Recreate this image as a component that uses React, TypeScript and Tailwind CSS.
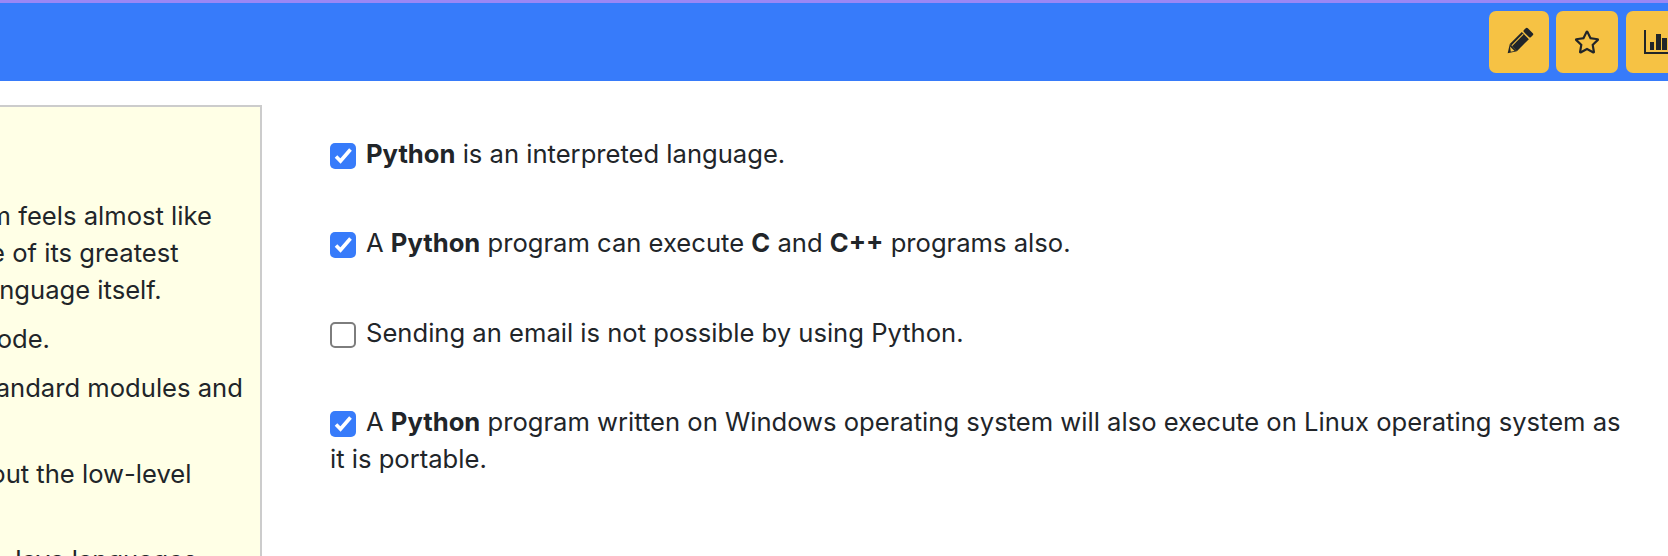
import React from 'react';
import { FaRegStar } from 'react-icons/fa';

const Check: React.FC<{ checked?: boolean }> = ({ checked }) =>
  checked ? (
    <span className="inline-flex w-[26px] h-[26px] rounded-[5px] bg-[#377bfa] items-center justify-center align-[-6px] mr-[10px]">
      <svg viewBox="0 0 26 26" className="w-[26px] h-[26px]" fill="none">
        <path d="M6 13.5l4.5 4.5L20.5 6.5" stroke="#fff" strokeWidth="3.6" />
      </svg>
    </span>
  ) : (
    <span className="inline-block w-[26px] h-[26px] rounded-[5px] bg-white border-2 border-[#7d7d7d] align-[-6px] mr-[10px]"></span>
  );

const PencilIcon = () => (
  <svg viewBox="0 0 24 24" className="w-6 h-6 overflow-visible">
    <g transform="rotate(45 12 12)" fill="#212529">
      <rect x="7" y="-4" width="10" height="5.5" rx="1.5" />
      <rect x="7" y="3" width="10" height="17" />
      <path d="M7 20h10l-5 8z" />
      <path d="M9.5 3.5V19.5" stroke="#f6c244" strokeWidth="1" />
      <path d="M8.8 21.5h6.4l-2.2 3.2" fill="#f6c244" />
    </g>
  </svg>
);

const ChartIcon = () => (
  <svg viewBox="0 0 30 24" className="w-[30px] h-6 ml-1" fill="#212529">
    <path d="M0 0h2v22h28v2H0z" />
    <rect x="6" y="12" width="4" height="8" />
    <rect x="12" y="4" width="5" height="16" />
    <rect x="18" y="8" width="5" height="12" />
    <rect x="24" y="2" width="4" height="18" />
  </svg>
);

const ToolButton: React.FC<{ className: string; children: React.ReactNode }> = ({ className, children }) => (
  <button className={`${className} h-[62px] rounded-[7px] bg-[#f6c244] text-[#212529] flex items-center justify-center text-[26px]`}>
    {children}
  </button>
);

export default function App() {
  return (
    <div className="w-[1668px] h-[556px] overflow-hidden bg-white text-[#212529] text-[25.6px] leading-[37px] font-['Inter',sans-serif]">
      <div className="h-[81px] border-t-[3px] border-[#9b87f5] bg-[#377bfa] flex justify-end items-center gap-[7px] mr-[-20px]">
        <ToolButton className="w-[60px]"><PencilIcon /></ToolButton>
        <ToolButton className="w-[62px]"><FaRegStar /></ToolButton>
        <ToolButton className="w-[62px] ml-px"><ChartIcon /></ToolButton>
      </div>

      <div className="flex mt-6">
        <div className="w-[262px] h-[500px] shrink-0 overflow-hidden border-r-2 border-t-2 border-[#cccccc] bg-[#ffffe6]">
          <div className="ml-[-380px] w-[700px] whitespace-nowrap pt-[90px] space-y-3">
            <p>
              Reading a good Python program feels almost like<br />
              This pseudo-code nature is one of its greatest<br />
              to focus on the tasks, not the language itself.
            </p>
            <p>Python is a free, open source code.</p>
            <p>
              Python has a very rich set of standard modules and<br />
              libraries.
            </p>
            <p>
              You need not have to worry about the low-level<br />
              details.
            </p>
            <p>Python is simpler than C++ and Java languages</p>
          </div>
        </div>

        <div className="flex-1 pl-[68px] pr-[40px] pt-[30px] space-y-[52.4px]">
          <p><Check checked /><b>Python</b> is an interpreted language.</p>
          <p><Check checked />A <b>Python</b> program can execute <b>C</b> and <b>C++</b> programs also.</p>
          <p><Check />Sending an email is not possible by using Python.</p>
          <p><Check checked />A <b>Python</b> program written on Windows operating system will also execute on Linux operating system as it is portable.</p>
        </div>
      </div>
    </div>
  );
}
